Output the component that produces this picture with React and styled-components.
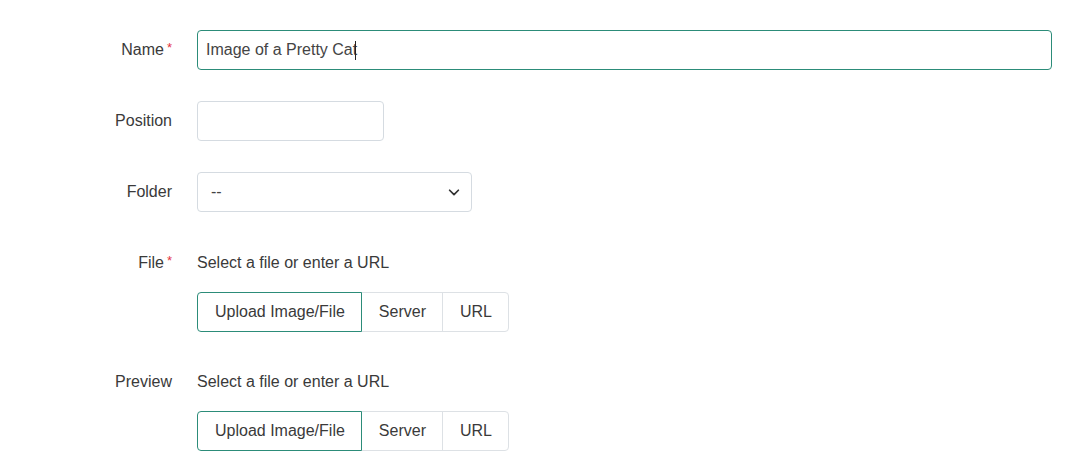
import React from "react";
import styled, { createGlobalStyle } from "styled-components";

const Global = createGlobalStyle`
  body { margin: 0; background: #fff; font-family: "Liberation Sans", Arial, sans-serif; font-size: 16px; color: #333; }
`;
const Form = styled.div`
  padding: 30px 21px 0 0;
  display: flex; flex-direction: column;
`;
const Row = styled.div`
  display: grid; grid-template-columns: 172px 1fr; column-gap: 25px;
  align-items: ${p => (p.$top ? "start" : "center")};
  margin-bottom: ${p => p.$mb}px;
`;
const Label = styled.label`
  text-align: right; color: #3a3a3a; line-height: 20px;
  ${p => p.$req && `&::after{content:"*";color:#e4333e;font-size:13px;margin-left:3px;vertical-align:top;position:relative;top:-2px;}`}
`;
const Input = styled.div`
  box-sizing: border-box; height: 40px; width: ${p => p.$w};
  border: 1px solid ${p => (p.$focus ? "#2c8c79" : "#d5dbe1")};
  border-radius: 4px; padding: 0 8px; display: flex; align-items: center;
  color: #444; background: #fff;
`;
const Caret = styled.span`
  display: inline-block; width: 1px; height: 19px; background: #222; margin-left: -2px;
`;
const Select = styled(Input)`
  justify-content: space-between; padding: 0 10px 0 13px;
`;
const Col = styled.div` display: flex; flex-direction: column; gap: 19px; `;
const Hint = styled.div` line-height: 20px; color: #3a3a3a; `;
const Group = styled.div` display: flex; `;
const Btn = styled.div`
  box-sizing: border-box; height: 40px; padding: 0 16px 0 17px; display: flex; align-items: center;
  border: 1px solid ${p => (p.$active ? "#2c8c79" : "#dde1e5")};
  margin-left: ${p => (p.$first ? 0 : -1)}px;
  border-radius: ${p => (p.$first ? "4px 0 0 4px" : p.$last ? "0 4px 4px 0" : "0")};
  position: relative; z-index: ${p => (p.$active ? 1 : 0)};
  color: #3a3a3a;
`;

const Buttons = () => (
  <Group>
    <Btn $first $active>Upload Image/File</Btn>
    <Btn>Server</Btn>
    <Btn $last>URL</Btn>
  </Group>
);

export default function App() {
  return (
    <>
      <Global />
      <Form>
        <Row $mb={31}>
          <Label $req>Name</Label>
          <Input $focus $w="100%">Image of a Pretty Cat<Caret /></Input>
        </Row>
        <Row $mb={31}>
          <Label>Position</Label>
          <Input $w="187px" />
        </Row>
        <Row $mb={41}>
          <Label>Folder</Label>
          <Select $w="275px">
            <span>--</span>
            <svg width="14" height="14" viewBox="0 0 16 16"><path d="M3 6l5 5 5-5" fill="none" stroke="#333" strokeWidth="2" strokeLinecap="round" strokeLinejoin="round"/></svg>
          </Select>
        </Row>
        <Row $top $mb={40}>
          <Label $req>File</Label>
          <Col><Hint>Select a file or enter a URL</Hint><Buttons /></Col>
        </Row>
        <Row $top $mb={0}>
          <Label>Preview</Label>
          <Col><Hint>Select a file or enter a URL</Hint><Buttons /></Col>
        </Row>
      </Form>
    </>
  );
}
